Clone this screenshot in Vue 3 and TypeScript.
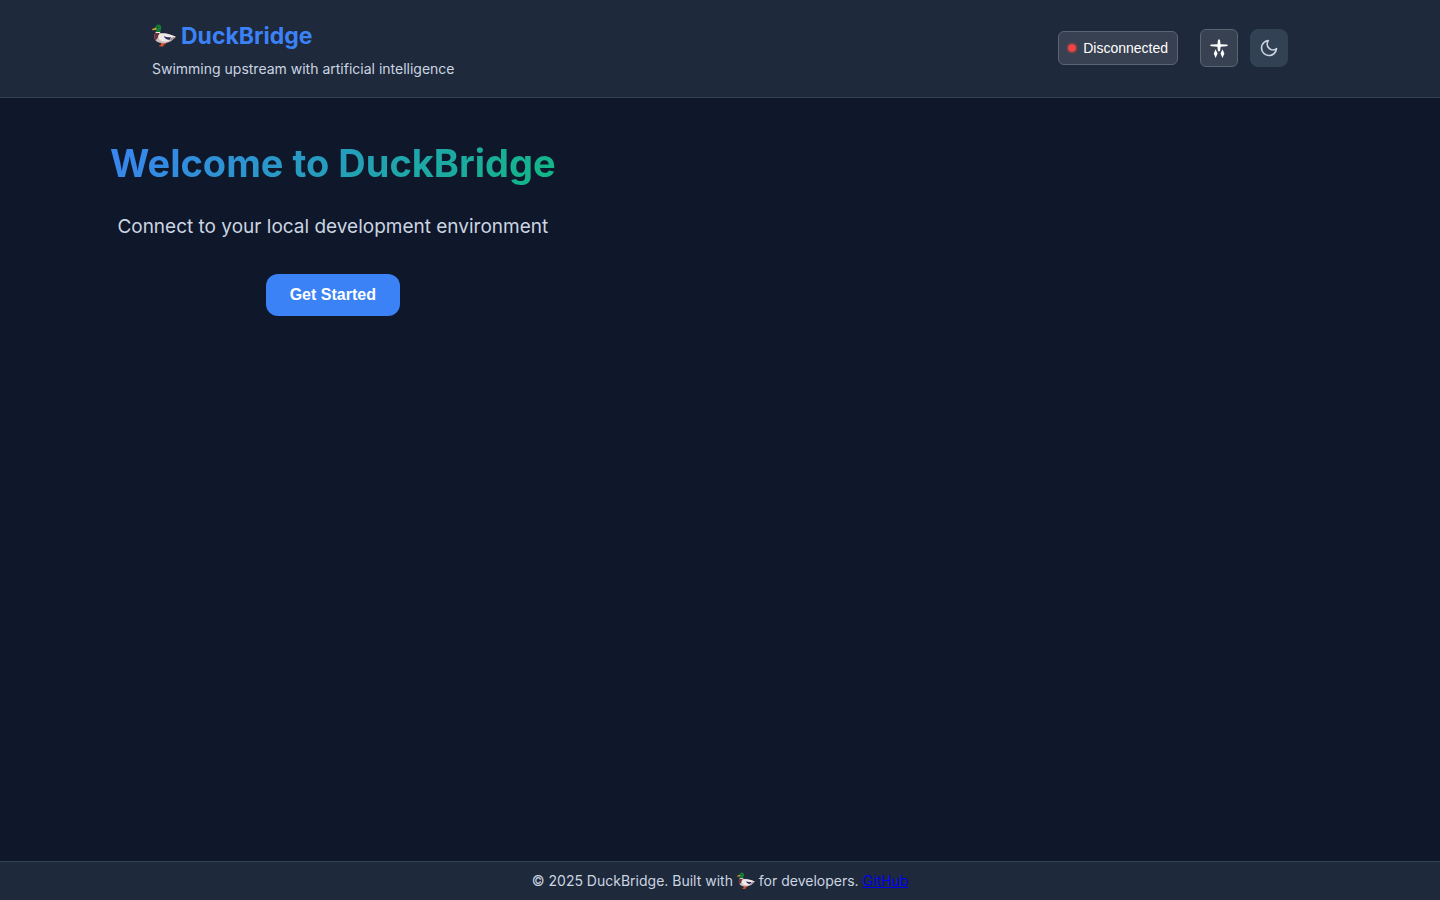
<script setup lang="ts">
import { ref } from 'vue'

const connected = ref<boolean>(false)
const year: number = 2025
</script>

<template>
  <svg class="sprite" aria-hidden="true">
    <symbol id="duck" viewBox="0 0 24 24">
      <path d="M8.500 17.500 9 20.500 6.500 22.300 11.500 22.600 11.800 18zM11.700 17.500l-.3 3.200 2.400-.6.500-3z" fill="#d9552d" />
      <path d="M3.200 9C1.800 12 2.300 15.800 4.800 17.600 8 19.700 14.500 19.600 17.800 17.800 20 16.600 21.500 14.800 23.800 12.900L19.500 10.900 13.500 9.600 8.200 9z" fill="#cdbcc0" />
      <path d="M3.500 8.800C2 11.500 2 14.600 3.500 16.200 5.400 15.200 6.600 12.500 7.600 8.800z" fill="#6b2f38" />
      <path d="M6.300 11.500C8.500 8.800 14.500 9.200 18.300 10.700L23.800 12.500 19.500 14.400 16 17.300C11 18.300 6 17 6.300 11.500z" fill="#f1e8e8" />
      <path d="M11.800 12C13.500 13.200 16.500 13.500 19 13.200L17.800 15.700C15.500 16.300 13 15 11.800 12z" fill="#252b60" />
      <path d="M18.800 13.900 23.900 12.400 20.500 15.700 17.800 16.400z" fill="#a58f83" />
      <path d="M3.700 7.700h4.500l-.1 1.400-4.600-.1z" fill="#eee9dc" />
      <path d="M3.200 4.200C3.400 1.900 4.700.6 6.500.6 8.700.6 9.700 2.500 9.200 4.600L8.300 7.900H3.800L4.300 5.600z" fill="#137c38" />
      <path d="M4.300 3.600.2 4.900.5 6.200 4.400 5.800z" fill="#d5a52d" />
      <circle cx="5.500" cy="3.300" r=".6" fill="#09291a" />
    </symbol>
  </svg>

  <div class="page">
    <header class="topbar">
      <div class="topbar-inner">
        <div class="brand">
          <h1 class="logo">
            <svg class="duck" role="img" aria-label="Duck"><use href="#duck" /></svg>
            <span>DuckBridge</span>
          </h1>
          <p class="tagline">Swimming upstream with artificial intelligence</p>
        </div>
        <div class="actions">
          <button class="status" type="button">
            <span class="dot" :class="{ on: connected }"></span>
            {{ connected ? 'Connected' : 'Disconnected' }}
          </button>
          <button class="icon-button effects" type="button" aria-label="Effects">
            <svg viewBox="0 0 20 20" width="20" height="20" fill="#fff" aria-hidden="true">
              <path d="M10 1.200Q11 1.200 11.200 3L11.500 6.200 17.500 6.600Q18.800 6.800 18.800 7.400T17.500 8.300L11.600 8.700 11.200 12Q10.900 13.500 10 13.500T8.800 12L8.400 8.700 2.500 8.300Q1.200 8.100 1.200 7.400T2.500 6.600L8.500 6.200 8.800 3Q9 1.200 10 1.200z" />
              <path d="M6.600 11.300 8.600 15.600 6.600 20 4.800 15.600zM13.500 11.300l1.900 4.300-1.900 4.400-2-4.400z" />
            </svg>
          </button>
          <button class="icon-button theme" type="button" aria-label="Toggle theme">
            <svg viewBox="0 0 24 24" width="20" height="20" fill="none" stroke="#cbd5e1" stroke-width="2" stroke-linecap="round" stroke-linejoin="round" aria-hidden="true">
              <path d="M21 12.790A9 9 0 1 1 11.210 3 7 7 0 0 0 21 12.790z" />
            </svg>
          </button>
        </div>
      </div>
    </header>

    <main class="content">
      <section class="hero">
        <h2>Welcome to DuckBridge</h2>
        <p>Connect to your local development environment</p>
        <button class="primary" type="button">Get Started</button>
      </section>
    </main>

    <footer class="footer">
      <p>
        © {{ year }} DuckBridge. Built with
        <svg class="duck" role="img" aria-label="duck"><use href="#duck" /></svg>
        for developers. <a href="#github">GitHub</a>
      </p>
    </footer>
  </div>
</template>

<style>
body {
  background: #0f172a;
}
</style>

<style scoped>
.sprite {
  position: absolute;
  width: 0;
  height: 0;
}

.page {
  display: flex;
  flex-direction: column;
  min-height: 100vh;
  background: #0f172a;
  color: #cbd5e1;
  font-family: Inter, "Liberation Sans", sans-serif;
}

h1,
h2,
p {
  margin: 0;
}

button {
  cursor: pointer;
  font-family: "Liberation Sans", Arial, sans-serif;
}

.topbar {
  background: #1e293b;
  border-bottom: 1px solid #334155;
}

.topbar-inner {
  display: flex;
  align-items: center;
  justify-content: space-between;
  box-sizing: border-box;
  max-width: 1200px;
  margin: 0 auto;
  padding: 16px 32px 18px;
}

.logo {
  display: flex;
  align-items: center;
  gap: 5px;
  color: #3b82f6;
  font-size: 23px;
  font-weight: 700;
  line-height: 40px;
}

.logo .duck {
  width: 24px;
  height: 24px;
}

.tagline {
  margin-top: 2px;
  font-size: 14px;
  line-height: 21px;
}

.actions {
  display: flex;
  align-items: center;
  gap: 12px;
}

.status {
  display: flex;
  align-items: center;
  gap: 7px;
  height: 34px;
  margin-right: 10px;
  padding: 0 9px;
  background: #374151;
  border: 1px solid #5b6472;
  border-radius: 6px;
  color: #fff;
  font-size: 14px;
}

.dot {
  width: 8px;
  height: 8px;
  border-radius: 50%;
  background: #ef4444;
  box-shadow: 0 0 0 2px rgba(239, 68, 68, 0.2);
}

.dot.on {
  background: #10b981;
}

.icon-button {
  display: grid;
  place-items: center;
  width: 38px;
  height: 38px;
  padding: 0;
  border: 1px solid #334155;
  border-radius: 8px;
  background: #334155;
}

.effects {
  background: #374151;
  border-color: #5b6472;
  border-radius: 6px;
}

.content {
  flex: 1;
  box-sizing: border-box;
  width: 100%;
  max-width: 1220px;
  margin: 0 auto;
  padding-top: 32px;
}

.hero {
  display: flex;
  flex-direction: column;
  align-items: center;
  width: fit-content;
  text-align: center;
}

.hero h2 {
  background: linear-gradient(135deg, #3b82f6, #10b981);
  background-clip: text;
  color: transparent;
  font-size: 38px;
  font-weight: 700;
  line-height: 66px;
}

.hero p {
  margin-top: 14px;
  font-size: 19px;
  line-height: 34px;
}

.primary {
  height: 42px;
  margin-top: 30px;
  padding: 0 24px;
  border: 0;
  border-radius: 12px;
  background: #3b82f6;
  color: #fff;
  font-size: 16px;
  font-weight: 700;
}

.footer {
  border-top: 1px solid #334155;
  background: #1e293b;
  text-align: center;
}

.footer p {
  padding: 8px 32px;
  font-size: 14px;
  line-height: 22px;
}

.footer .duck {
  width: 18px;
  height: 18px;
  vertical-align: -4px;
}

.footer a {
  color: #0000ee;
}
</style>
